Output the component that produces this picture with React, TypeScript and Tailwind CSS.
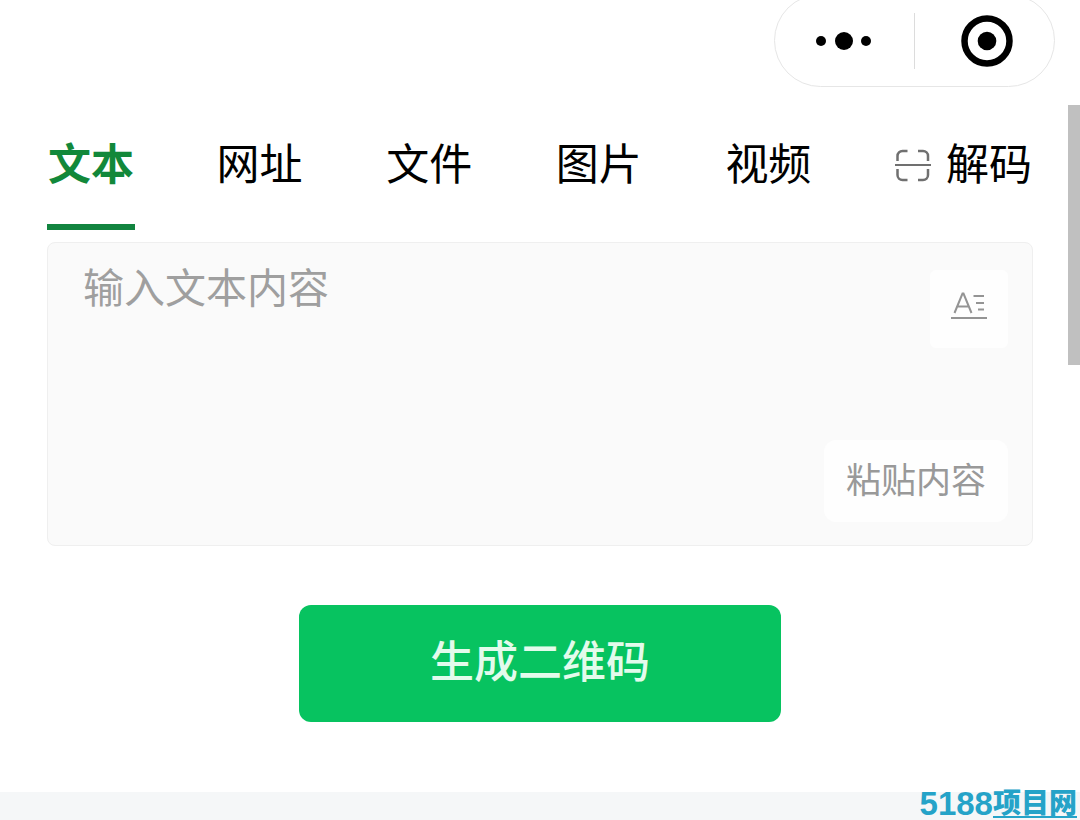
import { useState } from "react";

const TABS = ["文本", "网址", "文件", "图片", "视频"];

export default function App() {
  const [active, setActive] = useState("文本");
  const [text, setText] = useState("");

  return (
    <div className="relative flex min-h-screen flex-col overflow-hidden bg-white font-['Noto_Sans_CJK_SC',sans-serif] text-black">
      {/* Mini program capsule */}
      <header className="flex justify-end pr-[25px]">
        <div className="-mt-1.5 flex h-[93px] w-[281px] items-center rounded-full border border-[#e6e6e6] bg-white">
          <button type="button" aria-label="更多" className="flex w-[139px] justify-center pr-0.5">
            <MoreIcon />
          </button>
          <span className="h-14 w-px bg-[#dcdcdc]" />
          <button type="button" aria-label="关闭" className="flex flex-1 justify-center pl-1">
            <TargetIcon />
          </button>
        </div>
      </header>

      <main className="flex-1 px-[47px] pb-[70px]">
        <nav className="flex justify-between pt-[42px] text-[43px] leading-[64px]">
          {TABS.map((tab) => (
            <button
              key={tab}
              type="button"
              onClick={() => setActive(tab)}
              className={
                tab === active
                  ? "w-[88px] border-b-6 border-[#12843f] pb-[31px] font-bold text-[#12883a]"
                  : "w-[88px] border-b-6 border-transparent pr-0.5 pb-[31px]"
              }
            >
              {tab}
            </button>
          ))}
          <button type="button" className="flex items-center gap-3.5 border-b-6 border-transparent pb-[31px]">
            <ScanIcon />
            <span className="w-[88px]">解码</span>
          </button>
        </nav>

        {/* Input card */}
        <section className="mt-3 flex h-[304px] rounded-lg border border-[#efefef] bg-[#fafafa] pt-[18px] pr-6 pb-[23px] pl-[35px]">
          <textarea
            aria-label="输入文本内容"
            placeholder="输入文本内容"
            value={text}
            onChange={(e) => setText(e.target.value)}
            className="min-w-0 flex-1 resize-none bg-transparent text-[41px] leading-[48px] outline-none placeholder:text-[#9f9f9f]"
          />
          <div className="flex flex-col items-end justify-between pt-[9px]">
            <button
              type="button"
              aria-label="文本样式"
              className="flex size-[78px] items-center justify-center rounded-md bg-[#fefefe] pb-2 text-[#949494]"
            >
              <TextStyleIcon />
            </button>
            <button
              type="button"
              className="h-[82px] rounded-xl bg-[#fefefe] px-[22px] pb-1.5 text-[35px] leading-[48px] text-[#999999]"
            >
              粘贴内容
            </button>
          </div>
        </section>

        <div className="mt-[59px] flex justify-center">
          <button
            type="button"
            className="h-[117px] w-[482px] rounded-xl bg-[#07c360] pb-2.5 text-[44px] leading-[64px] font-medium text-[#e3fbec]"
          >
            生成二维码
          </button>
        </div>
      </main>

      <footer className="flex h-7 items-end justify-end bg-[#f5f7f8] pr-[3px] pb-0.5">
        <a href="#" className="flex items-end text-[28px] font-black text-[#25a3c8]">
          <span className="pb-1 font-['Liberation_Sans',sans-serif] text-[33px] leading-5 font-bold">5188</span>
          <span className="border-b-2 border-[#25a3c8] pb-1.5 leading-[18px]">项目网</span>
        </a>
      </footer>

      {/* Scroll thumb */}
      <div className="absolute top-[105px] right-0 h-[260px] w-3 bg-[#c0c0c0]" />
    </div>
  );
}

function MoreIcon() {
  return (
    <svg width="56" height="20" viewBox="0 0 56 20" fill="currentColor">
      <circle cx="5" cy="10" r="5" />
      <circle cx="28" cy="10" r="9" />
      <circle cx="50" cy="10" r="5" />
    </svg>
  );
}

function TargetIcon() {
  return (
    <svg width="52" height="52" viewBox="0 0 52 52">
      <circle cx="26" cy="26" r="22.5" fill="none" stroke="currentColor" strokeWidth="6.5" />
      <circle cx="26" cy="26" r="9.3" fill="currentColor" />
    </svg>
  );
}

function ScanIcon() {
  return (
    <svg width="36" height="46" viewBox="0 -10 36 46" fill="none" stroke="#707070" strokeWidth="2.5">
      <path d="M2.5 13V8a5 5 0 0 1 5-5h5M23 3h5a5 5 0 0 1 5 5v5M2.5 21v6a5 5 0 0 0 5 5h5M23 32h5a5 5 0 0 0 5-5v-6" />
      <path d="M0 17h36" strokeWidth="2" />
    </svg>
  );
}

function TextStyleIcon() {
  return (
    <svg width="36" height="36" viewBox="0 0 36 36" fill="none" stroke="currentColor" strokeWidth="2">
      <path d="M3.5 26 11.5 6.500h1L20.500 26M6.500 19.500h11" />
      <path d="M22.5 9H33M25 16h8M27 22.500h6" />
      <path d="M0 31h36" />
    </svg>
  );
}
